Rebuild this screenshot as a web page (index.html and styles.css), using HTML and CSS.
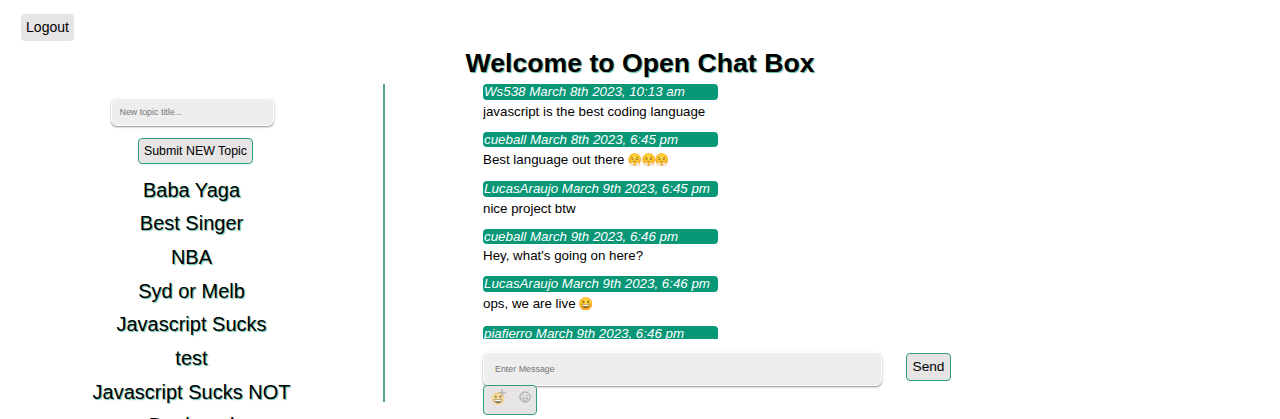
FILE: index.html
```html
<!DOCTYPE html>
<html lang="en">
<head>
<meta charset="utf-8">
<title>Open Chat Box</title>
<link rel="stylesheet" href="styles.css">
</head>
<body>
<svg class="defs" width="0" height="0" aria-hidden="true">
  <defs>
    <radialGradient id="face" cx="50%" cy="40%" r="60%">
      <stop offset="0" stop-color="#ffe04f"/><stop offset=".6" stop-color="#fcc52e"/><stop offset="1" stop-color="#f09a28"/>
    </radialGradient>
    <symbol id="huff" viewBox="0 0 26 26">
      <circle cx="13" cy="12.500" r="12.500" fill="url(#face)"/>
      <path d="M6 8l5 2.500M20 8l-5 2.500" stroke="#8a5410" stroke-width="1.500"/>
      <path d="M6.500 12.500q2 1.500 4 0M15.500 12.500q2 1.500 4 0" fill="none" stroke="#7d4a0c" stroke-width="1.500"/>
      <path d="M10 17.500q3-2.500 6 0" fill="none" stroke="#a35f12" stroke-width="1.500"/>
      <path d="M10 18q-2 3-6 2-3 2-1 5 5 1 7-1 2-3 0-6zM16 18q2 3 6 2 3 2 1 5-5 1-7-1-2-3 0-6z" fill="#f6eee4" stroke="#e8c391" stroke-width=".6"/>
    </symbol>
    <symbol id="laugh" viewBox="0 0 26 26">
      <circle cx="13" cy="13" r="13" fill="url(#face)"/>
      <path d="M6 7l4.500 2.500L6 12M20 7l-4.500 2.500L20 12" fill="none" stroke="#80500f" stroke-width="1.700"/>
      <path d="M5 14.500h16q-1 7-8 7t-8-7z" fill="#80500f"/>
      <path d="M6.500 15h13l-1 3h-11z" fill="#fff"/>
    </symbol>
  </defs>
</svg>
<header class="topbar"><button class="btn logout">Logout</button></header>
<h1 class="title">Welcome to Open Chat Box</h1>
<main class="layout">
  <aside class="topics">
    <input class="field topic-field" placeholder="New topic title...">
    <button class="btn submit">Submit NEW Topic</button>
    <ul class="topic-list">
      <li>Baba Yaga</li><li>Best Singer</li><li>NBA</li><li>Syd or Melb</li><li>Javascript Sucks</li><li>test</li><li>Javascript Sucks NOT</li><li>Dunk and</li>
    </ul>
  </aside>
  <section class="chat">
    <div class="messages">
      <article class="msg"><div class="meta">Ws538 March 8th 2023, 10:13 am</div><p>javascript is the best coding language</p></article>
      <article class="msg tall"><div class="meta">cueball March 8th 2023, 6:45 pm</div><p>Best language out there <svg class="emoji"><use href="#huff"/></svg><svg class="emoji"><use href="#huff"/></svg><svg class="emoji"><use href="#huff"/></svg></p></article>
      <article class="msg"><div class="meta">LucasAraujo March 9th 2023, 6:45 pm</div><p>nice project btw</p></article>
      <article class="msg"><div class="meta">cueball March 9th 2023, 6:46 pm</div><p>Hey, what's going on here?</p></article>
      <article class="msg tall"><div class="meta">LucasAraujo March 9th 2023, 6:46 pm</div><p>ops, we are live <svg class="emoji"><use href="#laugh"/></svg></p></article>
      <article class="msg"><div class="meta">piafierro March 9th 2023, 6:46 pm</div></article>
    </div>
    <div class="composer">
      <input class="field message-field" placeholder="Enter Message">
      <button class="btn send">Send</button>
    </div>
    <div class="picker">
      <svg class="add-face" viewBox="0 0 16 18">
        <circle cx="7" cy="10.500" r="6.500" fill="#f3d795"/>
        <circle cx="4.700" cy="8.700" r="1" fill="#85754f"/><circle cx="9.300" cy="8.700" r="1" fill="#85754f"/>
        <path d="M2.800 11.300h8.400q-.6 4-4.200 4t-4.200-4z" fill="#7c7259"/>
        <path d="M3.700 11.700h6.600v1.500H3.700z" fill="#fff"/>
        <path d="M11.200 1v7.400M7.500 4.700h7.400" stroke="#aaa7a7" stroke-width="1.100"/>
      </svg>
      <svg class="line-face" viewBox="0 0 12 12" fill="none" stroke="#a5a1a3">
        <circle cx="6" cy="6" r="5.100" stroke-width="1"/>
        <path d="M3 7h6Q8.500 9.500 6 9.500T3 7z" stroke-width=".8"/>
        <path d="M4.200 3.400v1.700M7.800 3.400v1.700" stroke-width="1.100"/>
      </svg>
    </div>
  </section>
</main>
</body>
</html>
```

FILE: styles.css
```css
* { box-sizing: border-box; }
html { overflow: hidden; }
body {
  margin: 0;
  height: 419px;
  overflow: hidden;
  background: #fff;
  color: #000;
  font: 13.33px/15.5px "Liberation Sans", Arial, sans-serif;
}
.defs { position: absolute; }
.topbar { height: 47px; padding: 14px 0 0 21px; }
.btn {
  display: block;
  padding: 0;
  font-family: inherit;
  color: #000;
  background: #e7e4e6;
  border: 1px solid #2f9f84;
  border-radius: 4px;
}
.logout { width: 53px; height: 27px; padding-bottom: 1px; border: 0; font-size: 14px; }
.title {
  margin: 0;
  height: 37px;
  text-align: center;
  font-size: 26.67px;
  line-height: 33px;
  text-shadow: 1px 1px 1px rgba(7, 151, 119, .65);
}
.layout { display: flex; align-items: flex-start; }
.topics {
  width: 385px;
  height: 318px;
  padding: 14px 0 0;
  border-right: 2px solid #5aa191;
  display: flex;
  flex-direction: column;
  align-items: center;
}
.field {
  display: block;
  margin: 0;
  background: #eee;
  border: 1px solid #fff;
  border-radius: 6px;
  outline: 0;
  box-shadow: 0 1px 2px rgba(0, 0, 0, .45);
  font: 8.9px "Liberation Sans", Arial, sans-serif;
}
.field::placeholder { color: #757575; opacity: 1; }
.topic-field { flex: none; width: 163px; height: 28px; margin-left: 1px; padding: 0 8px 1px; }
.submit { flex: none; width: 115px; height: 26px; margin: 12px 0 0 8px; font-size: 12.4px; }
.topic-list {
  margin: 9.5px 0 0;
  padding: 0;
  list-style: none;
  text-align: center;
  font-size: 20px;
  line-height: 33.7px;
  white-space: nowrap;
  text-shadow: 1px 1px 1px rgba(7, 151, 119, .65);
}
.chat { width: 470px; margin-left: 98px; }
.messages { height: 255px; padding-top: .4px; overflow: hidden; }
.msg { width: 235px; height: 47.4px; white-space: nowrap; }
.msg.tall { height: 49.5px; }
.meta {
  height: 15.6px;
  padding-left: 1px;
  line-height: 16px;
  border-radius: 4px;
  background: #079777;
  color: #fff;
  font-style: italic;
}
.msg p { margin: 4px 0 0; line-height: 16px; }
.msg.tall p { margin-top: 4.5px; }
.emoji { width: 13.33px; height: 13.33px; vertical-align: -2.5px; }
.composer { display: flex; margin-top: 13px; }
.message-field { width: 399px; height: 34px; padding: 0 11px 1px; }
.send { width: 45px; height: 28px; margin: 1px 0 0 24px; padding-bottom: 1px; font-size: 13.7px; }
.picker {
  position: relative;
  width: 54px;
  height: 30px;
  display: flex;
  margin-top: -.6px;
  padding: 2px 0 0 7px;
  background: #e7e4e6;
  border: 1px solid #2f9f84;
  border-radius: 4px;
}
.add-face { width: 16px; height: 18px; }
.line-face { width: 12px; height: 12px; margin: 3px 0 0 11.5px; }
```
